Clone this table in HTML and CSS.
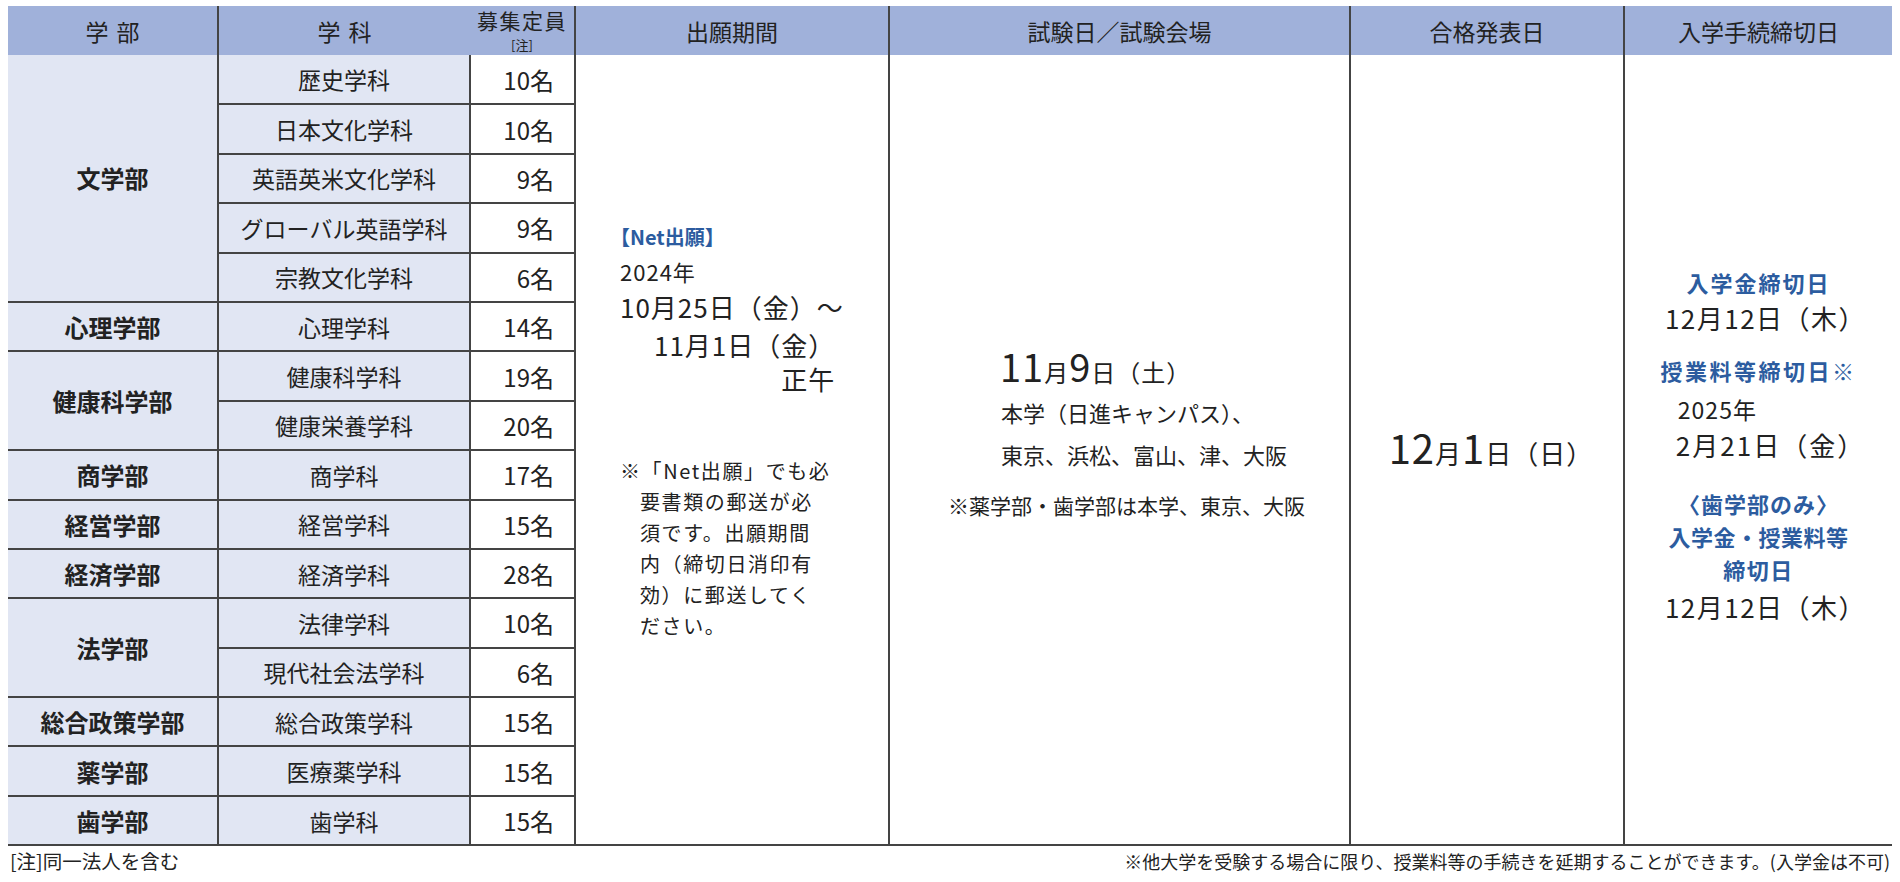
FILE: index.html
```html
<!DOCTYPE html>
<html lang="ja">
<head>
<meta charset="utf-8">
<title>入試日程</title>
<link rel="stylesheet" href="styles.css">
</head>
<body>
<table class="grid">
  <colgroup>
    <col class="w-fac"><col class="w-dep"><col class="w-cap"><col class="w-apply"><col class="w-exam"><col class="w-result"><col class="w-proc">
  </colgroup>
  <thead>
    <tr>
      <th class="h-fac">学 部</th>
      <th class="h-dep">学 科</th>
      <th class="h-cap"><span class="cap-main">募集定員</span><span class="cap-note">[注]</span></th>
      <th>出願期間</th>
      <th>試験日／試験会場</th>
      <th>合格発表日</th>
      <th class="h-last">入学手続締切日</th>
    </tr>
  </thead>
  <tbody>
    <tr>
      <td class="fac" rowspan="5">文学部</td>
      <td class="dep">歴史学科</td>
      <td class="cap">10名</td>
      <td class="big apply" rowspan="16">
        <div class="apply-blue">【Net出願】</div>
        <div class="apply-year">2024年</div>
        <div class="apply-d1">10月25日（金）〜</div>
        <div class="apply-d2"><span class="stack">11月1日（金）<br>正午</span></div>
        <div class="apply-note">※「Net出願」でも必<br>要書類の郵送が必<br>須です。出願期間<br>内（締切日消印有<br>効）に郵送してく<br>ださい。</div>
      </td>
      <td class="big exam" rowspan="16">
        <div class="exam-date"><span class="n">11</span>月<span class="n">9</span>日（土）</div>
        <div class="exam-place">本学（日進キャンパス）、</div>
        <div class="exam-place">東京、浜松、富山、津、大阪</div>
        <div class="exam-note">※薬学部・歯学部は本学、東京、大阪</div>
      </td>
      <td class="big result" rowspan="16">
        <div class="result-date"><span class="n">12</span>月<span class="n">1</span>日（日）</div>
      </td>
      <td class="big proc" rowspan="16">
        <div class="proc-blue l1">入学金締切日</div>
        <div class="proc-date l2">12月12日（木）</div>
        <div class="proc-blue l3">授業料等締切日※</div>
        <div class="proc-stack"><span class="stack-left"><span class="proc-year">2025年</span><br><span class="proc-date2">2月21日（金）</span></span></div>
        <div class="proc-blue l6">〈歯学部のみ〉</div>
        <div class="proc-blue l7">入学金・授業料等</div>
        <div class="proc-blue l8">締切日</div>
        <div class="proc-date l9">12月12日（木）</div>
      </td>
    </tr>
    <tr><td class="dep">日本文化学科</td><td class="cap">10名</td></tr>
    <tr><td class="dep">英語英米文化学科</td><td class="cap">9名</td></tr>
    <tr><td class="dep">グローバル英語学科</td><td class="cap">9名</td></tr>
    <tr><td class="dep">宗教文化学科</td><td class="cap">6名</td></tr>
    <tr><td class="fac">心理学部</td><td class="dep">心理学科</td><td class="cap">14名</td></tr>
    <tr><td class="fac" rowspan="2">健康科学部</td><td class="dep">健康科学科</td><td class="cap">19名</td></tr>
    <tr><td class="dep">健康栄養学科</td><td class="cap">20名</td></tr>
    <tr><td class="fac">商学部</td><td class="dep">商学科</td><td class="cap">17名</td></tr>
    <tr><td class="fac">経営学部</td><td class="dep">経営学科</td><td class="cap">15名</td></tr>
    <tr><td class="fac">経済学部</td><td class="dep">経済学科</td><td class="cap">28名</td></tr>
    <tr><td class="fac" rowspan="2">法学部</td><td class="dep">法律学科</td><td class="cap">10名</td></tr>
    <tr><td class="dep">現代社会法学科</td><td class="cap">6名</td></tr>
    <tr><td class="fac">総合政策学部</td><td class="dep">総合政策学科</td><td class="cap">15名</td></tr>
    <tr><td class="fac">薬学部</td><td class="dep">医療薬学科</td><td class="cap">15名</td></tr>
    <tr><td class="fac">歯学部</td><td class="dep">歯学科</td><td class="cap">15名</td></tr>
  </tbody>
</table>
<div class="footer">
  <span class="foot-left">[注]同一法人を含む</span>
  <span class="foot-right">※他大学を受験する場合に限り、授業料等の手続きを延期することができます。(入学金は不可)</span>
</div>
</body>
</html>
```

FILE: styles.css
```css
html, body {
  background: #ffffff;
}
body {
  margin: 6px 8px 0;
  font-family: "Noto Sans CJK JP", "Noto Sans", sans-serif;
  color: #222222;
}

.grid {
  width: 100%;
  border-collapse: collapse;
  table-layout: fixed;
}
.w-fac { width: 210px; }
.w-dep { width: 252px; }
.w-cap { width: 105px; }
.w-apply { width: 314px; }
.w-exam { width: 461px; }
.w-result { width: 274px; }
.w-proc { width: 268px; }

.grid th {
  background: #a0b1da;
  font-weight: 400;
  font-size: 23px;
  height: 49px;
  padding: 0;
  border-right: 2px solid #444;
  text-align: center;
  vertical-align: middle;
  white-space: nowrap;
}
.grid th.h-dep { border-right: none; }
.grid th.h-last { border-right: none; }
.grid th.h-fac, .grid th.h-dep { word-spacing: 3px; }
.grid th.h-cap { line-height: 1; }
.cap-main {
  display: block;
  font-size: 21px;
  line-height: 29px;
  letter-spacing: 1.5px;
}
.cap-note {
  display: block;
  font-size: 13px;
  line-height: 20px;
}

.grid tbody tr { height: 49.4px; }
.grid td {
  padding: 0;
  font-size: 23px;
  border-bottom: 2px solid #444;
  border-right: 2px solid #444;
  vertical-align: middle;
  white-space: nowrap;
}
.grid td.fac {
  background: #e1e6f3;
  font-weight: 700;
  font-size: 24px;
  text-align: center;
}
.grid td.dep {
  background: #e1e6f3;
  text-align: center;
}
.grid td.cap {
  text-align: right;
  padding-right: 20px;
  font-size: 24px;
}
.grid td.big {
  vertical-align: top;
}
.grid td.proc { border-right: none; }

/* 出願期間 */
.grid td.apply { padding-top: 165px; padding-left: 44px; }
.apply-blue {
  color: #2c5c9f;
  font-weight: 700;
  font-size: 20px;
  line-height: 34px;
  margin-left: -10px;
}
.apply-year {
  font-size: 22px;
  line-height: 34px;
  letter-spacing: 1px;
}
.apply-d1 {
  font-size: 26px;
  line-height: 38px;
  letter-spacing: 1px;
}
.apply-d2 {
  font-size: 26px;
  padding-left: 34px;
  margin-top: 2px;
  letter-spacing: 1px;
}
.stack {
  display: inline-block;
  text-align: right;
  line-height: 34px;
}
.apply-note {
  margin-top: 58px;
  font-size: 20px;
  line-height: 31px;
  letter-spacing: 1.6px;
  padding-left: 20px;
  text-indent: -20px;
}

/* 試験日 */
.grid td.exam { padding-top: 292px; padding-left: 58px; }
.exam-date {
  padding-left: 52px;
  font-size: 24px;
  line-height: 38px;
  letter-spacing: 1px;
}
.n { font-size: 38px; letter-spacing: 1px; }
.exam-place {
  padding-left: 53px;
  font-size: 22px;
  line-height: 42px;
}
.exam-note {
  margin-top: 14px;
  font-size: 21px;
  line-height: 32px;
}

/* 合格発表日 */
.grid td.result {
  vertical-align: middle;
  text-align: center;
}
.result-date {
  font-size: 26px;
  line-height: 48px;
  letter-spacing: 1px;
  padding-left: 8px;
}
.result-date .n { font-size: 40px; }

/* 入学手続締切日 */
.grid td.proc { padding-top: 210px; text-align: center; }
.proc-blue {
  color: #2c5c9f;
  font-weight: 700;
  font-size: 22px;
  line-height: 34px;
  letter-spacing: 2px;
}
.proc-date {
  font-size: 26px;
  line-height: 38px;
  letter-spacing: 1.5px;
  padding-left: 14px;
}
.l3 { margin-top: 16px; letter-spacing: 2.5px; }
.proc-stack { margin-top: 4px; padding-left: 24px; }
.stack-left {
  display: inline-block;
  text-align: left;
  line-height: 36px;
}
.proc-year { font-size: 23px; letter-spacing: 1px; padding-left: 2px; }
.proc-date2 { font-size: 26px; letter-spacing: 2px; }
.l6 { margin-top: 22px; letter-spacing: 1px; }
.l7 { line-height: 33px; letter-spacing: 0.5px; }
.l8 { line-height: 33px; letter-spacing: 1.5px; }
.l9 { line-height: 42px; }

/* footer */
.footer {
  display: flex;
  justify-content: space-between;
  align-items: center;
  line-height: 28px;
  padding: 1px 2px 0 2px;
  color: #222;
}
.foot-left { font-size: 19.5px; }
.foot-right { font-size: 18px; }
```
